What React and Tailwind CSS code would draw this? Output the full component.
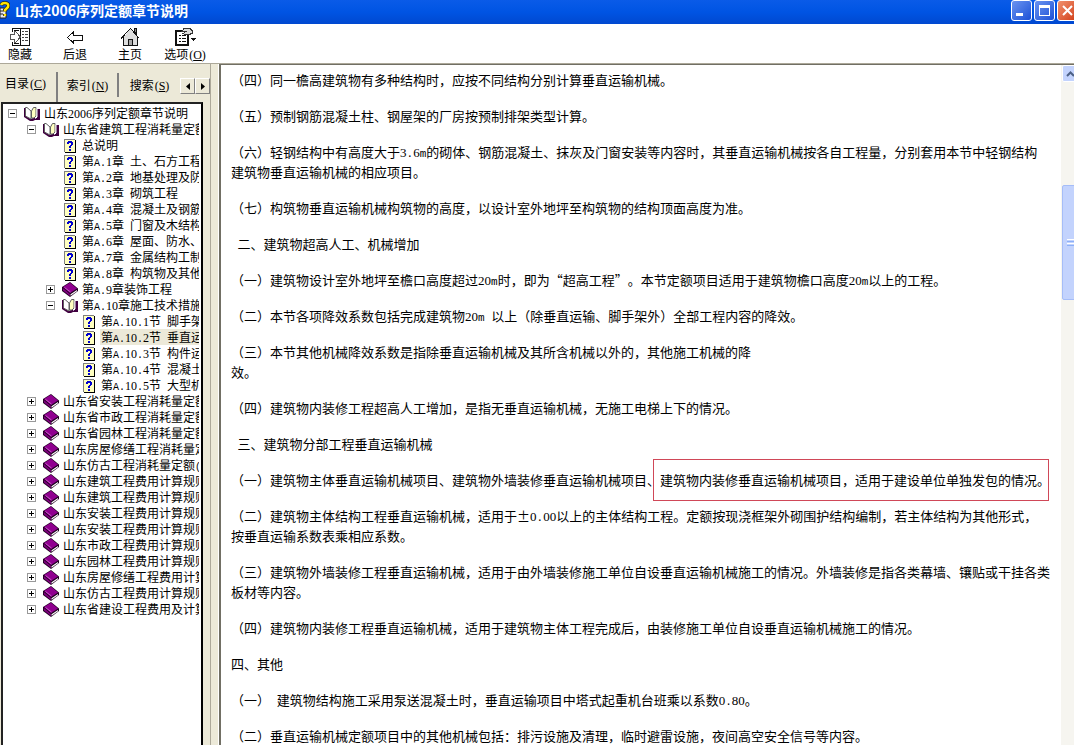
import { Fragment } from "react";

const TREE = [
  { level: 0, icon: "open", text: "山东2006序列定额章节说明" },
  { level: 1, icon: "open", text: "山东省建筑工程消耗量定额" },
  { level: 2, icon: "page", text: "总说明" },
  { level: 2, icon: "page", text: "第A.1章 土、石方工程" },
  { level: 2, icon: "page", text: "第A.2章 地基处理及防" },
  { level: 2, icon: "page", text: "第A.3章 砌筑工程" },
  { level: 2, icon: "page", text: "第A.4章 混凝土及钢筋" },
  { level: 2, icon: "page", text: "第A.5章 门窗及木结构" },
  { level: 2, icon: "page", text: "第A.6章 屋面、防水、" },
  { level: 2, icon: "page", text: "第A.7章 金属结构工制" },
  { level: 2, icon: "page", text: "第A.8章 构筑物及其他" },
  { level: 2, icon: "closed", text: "第A.9章装饰工程" },
  { level: 2, icon: "open", text: "第A.10章施工技术措施" },
  { level: 3, icon: "page", text: "第A.10.1节 脚手架" },
  { level: 3, icon: "page", text: "第A.10.2节 垂直运", selected: true },
  { level: 3, icon: "page", text: "第A.10.3节 构件运" },
  { level: 3, icon: "page", text: "第A.10.4节 混凝土" },
  { level: 3, icon: "page", text: "第A.10.5节 大型机" },
  { level: 1, icon: "closed", text: "山东省安装工程消耗量定额" },
  { level: 1, icon: "closed", text: "山东省市政工程消耗量定额" },
  { level: 1, icon: "closed", text: "山东省园林工程消耗量定额" },
  { level: 1, icon: "closed", text: "山东房屋修缮工程消耗量定" },
  { level: 1, icon: "closed", text: "山东仿古工程消耗量定额(" },
  { level: 1, icon: "closed", text: "山东建筑工程费用计算规则" },
  { level: 1, icon: "closed", text: "山东建筑工程费用计算规则" },
  { level: 1, icon: "closed", text: "山东安装工程费用计算规则" },
  { level: 1, icon: "closed", text: "山东安装工程费用计算规则" },
  { level: 1, icon: "closed", text: "山东市政工程费用计算规则" },
  { level: 1, icon: "closed", text: "山东园林工程费用计算规则" },
  { level: 1, icon: "closed", text: "山东房屋修缮工程费用计算" },
  { level: 1, icon: "closed", text: "山东仿古工程费用计算规则" },
  { level: 1, icon: "closed", text: "山东省建设工程费用及计算" },
];

const INDENT = ["pl-[5px]", "pl-[24px]", "pl-[43px]", "pl-[62px]"];

const PARAGRAPHS = [
  { text: "（四）同一檐高建筑物有多种结构时，应按不同结构分别计算垂直运输机械。" },
  { text: "（五）预制钢筋混凝土柱、钢屋架的厂房按预制排架类型计算。" },
  {
    text: "（六）轻钢结构中有高度大于3.6m的砌体、钢筋混凝土、抹灰及门窗安装等内容时，其垂直运输机械按各自工程量，分别套用本节中轻钢结构\n建筑物垂直运输机械的相应项目。",
  },
  { text: "（七）构筑物垂直运输机械构筑物的高度，以设计室外地坪至构筑物的结构顶面高度为准。" },
  { text: " 二、建筑物超高人工、机械增加" },
  {
    text: "（一）建筑物设计室外地坪至檐口高度超过20m时，即为“超高工程”。本节定额项目适用于建筑物檐口高度20m以上的工程。",
  },
  { text: "（二）本节各项降效系数包括完成建筑物20m 以上（除垂直运输、脚手架外）全部工程内容的降效。" },
  { text: "（三）本节其他机械降效系数是指除垂直运输机械及其所含机械以外的，其他施工机械的降\n效。" },
  { text: "（四）建筑物内装修工程超高人工增加，是指无垂直运输机械，无施工电梯上下的情况。" },
  { text: " 三、建筑物分部工程垂直运输机械" },
  {
    text: "（一）建筑物主体垂直运输机械项目、建筑物外墙装修垂直运输机械项目、",
    marked: "建筑物内装修垂直运输机械项目，适用于建设单位单独发包的情况。",
  },
  {
    text: "（二）建筑物主体结构工程垂直运输机械，适用于±0.00以上的主体结构工程。定额按现浇框架外砌围护结构编制，若主体结构为其他形式，\n按垂直运输系数表乘相应系数。",
  },
  {
    text: "（三）建筑物外墙装修工程垂直运输机械，适用于由外墙装修施工单位自设垂直运输机械施工的情况。外墙装修是指各类幕墙、镶贴或干挂各类\n板材等内容。",
  },
  { text: "（四）建筑物内装修工程垂直运输机械，适用于建筑物主体工程完成后，由装修施工单位自设垂直运输机械施工的情况。" },
  { text: "四、其他" },
  { text: "（一） 建筑物结构施工采用泵送混凝土时，垂直运输项目中塔式起重机台班乘以系数0.80。" },
  { text: "（二）垂直运输机械定额项目中的其他机械包括：排污设施及清理，临时避雷设施，夜间高空安全信号等内容。" },
];

// Digits come from the serif face, whose figures are half an em wide.
// Other Latin runs use a small mono face of the same width, ± takes a full cell.
function Mixed({ text, small }) {
  return text.split(/([0-9]+|[\x20-\x2f\x3a-\x7e]+|±)/).map((part, i) => {
    if (i % 2 === 0) {
      return <Fragment key={i}>{part}</Fragment>;
    }
    if (part === "±") {
      return (
        <span key={i} className="inline-block w-[13px] text-center leading-none">
          ±
        </span>
      );
    }
    return (
      <span
        key={i}
        className={
          /[0-9]/.test(part)
            ? "font-['Liberation_Serif',serif] leading-none"
            : `font-['Liberation_Mono',monospace] leading-none ${small}`
        }
      >
        {part}
      </span>
    );
  });
}

function HotKey({ letter }) {
  return (
    <span className="pl-px font-['Liberation_Serif',serif] leading-none">
      (<span className="underline">{letter}</span>)
    </span>
  );
}

function HelpIcon() {
  return (
    <svg width="10" height="18" viewBox="0 0 10 18" aria-hidden="true">
      <path d="M0 7h4l2 3v7H0z" fill="#e8e8f0" stroke="#222" />
      <path d="M0 10h3M0 13h3" stroke="#222" />
      <path d="M1 4q1-2 4-2q4 0 3 4l-3 3v1.500M5 13v2" fill="none" stroke="#222" strokeWidth="4" />
      <path d="M1 4q1-2 4-2q4 0 3 4l-3 3v1.500M5 13v2" fill="none" stroke="#ffe600" strokeWidth="2.500" />
    </svg>
  );
}

function HideIcon() {
  return (
    <svg width="20" height="18" viewBox="0 0 20 18" shapeRendering="crispEdges" aria-hidden="true">
      <path d="M2 0h18v18H2v-4h1v3h16V1H3v3H2z" fill="#111" />
      <path d="M10 1h1v16h-1zM4 2h5v1H4zM4 15h5v1H4z" fill="#111" />
      <path d="M12 3h2v1h-2zM15 3h3v1h-3zM12 6h2v1h-2zM15 6h3v1h-3zM12 9h2v1h-2zM15 9h3v1h-3zM12 12h2v1h-2zM15 12h3v1h-3z" fill="#444" />
      <path d="M.5 6.500H4v-3h1.500l5 5.500-5 5.500H4v-3H.5z" fill="#fff" stroke="#555" />
    </svg>
  );
}

function BackIcon() {
  return (
    <svg width="16" height="18" viewBox="0 0 16 18" shapeRendering="crispEdges" aria-hidden="true">
      <path d="M.5 9.500l6-5.500v3h8.500v5h-8.500v3z" fill="#fff" stroke="#111" />
    </svg>
  );
}

function HomeIcon() {
  return (
    <svg width="20" height="20" viewBox="0 0 20 20" shapeRendering="crispEdges" aria-hidden="true">
      <path d="M14.500 1h2v6l-2-2z" fill="#888" stroke="#111" />
      <path d="M3.500 10v9h14v-9L10.500 2z" fill="#ddd" />
      <path d="M3.500 10v8.500h14V10M1 11.500L10.500 1.500 19 11" fill="none" stroke="#111" />
      <path d="M8.500 18v-6h4v6" fill="#aaa" stroke="#111" />
    </svg>
  );
}

function OptionsIcon() {
  return (
    <svg width="21" height="18" viewBox="0 0 21 18" shapeRendering="crispEdges" aria-hidden="true">
      <path d="M1 3h12v14H1z" fill="#fff" stroke="#111" strokeWidth="2" />
      <path d="M4 7.500h2M7 7.500h4M4 10.500h2M7 10.500h4M4 13.500h2M7 13.500h4" stroke="#111" />
      <path d="M6.500 3.500L9 .5h6l2 2v3l-3 1h-4l-2-1 3-2z" fill="#ddd" stroke="#333" />
      <path d="M16 10h5v1h-1v1h-1v1h-1v-1h-1v-1h-1z" fill="#111" />
    </svg>
  );
}

function PageIcon() {
  return (
    <svg width="12" height="15" viewBox="0 0 12 15" shapeRendering="crispEdges" aria-hidden="true">
      <path d="M0 1h11v13H0z" fill="#808080" />
      <path d="M1 2h10v12H1z" fill="#ffffc0" />
      <path d="M11 2h1v13H1v-1h10z" fill="#000" />
      <path d="M3 4h1V3h4v1h1v3H8v1H7v2H5V8h1V7h1V5H5v1H3zM5 11h2v2H5z" fill="#0000d0" />
    </svg>
  );
}

function ClosedBookIcon() {
  return (
    <svg width="16" height="15" viewBox="0 0 16 15" aria-hidden="true">
      <path d="M0 5L8 0l8 6.500V9l-8 6-8-6z" fill="#200020" />
      <path d="M1 5l7-4.300L15 6.500 8 11z" fill="#900090" />
      <path d="M.8 6L8 12v2L1 8.500z" fill="#800080" />
      <path d="M8.500 12.300L15 8v1.200L8.500 13.800z" fill="#fff" />
      <path d="M2.500 5.500l6 4.500" stroke="#e080e0" strokeWidth=".7" />
    </svg>
  );
}

function OpenBookIcon() {
  return (
    <svg width="16" height="15" viewBox="0 0 16 15" aria-hidden="true">
      <path d="M0 2h2v8l5 3 2-1h4V3h3v11h-5l-2 1H6L0 11z" fill="#400040" />
      <path d="M1.500 1.500H3l4 3.500v8L1.500 10z" fill="#fff" stroke="#606060" />
      <path d="M7.500 5l2-3.500H12V10l-2 2H7.500z" fill="#ffffc0" stroke="#606060" />
      <path d="M13 2.500V11l-2 1.500" fill="none" stroke="#fff" />
    </svg>
  );
}

const ICONS = { open: OpenBookIcon, closed: ClosedBookIcon, page: PageIcon };

function Expander({ open }) {
  return (
    <button type="button" aria-label={open ? "折叠" : "展开"} className="h-[9px] w-[9px] shrink-0">
      <svg width="9" height="9" viewBox="0 0 9 9" shapeRendering="crispEdges" className="block">
        <path d="M.5.5h8v8h-8z" fill="#fff" stroke="#999" />
        <path d={open ? "M2 4.500h5" : "M2 4.500h5M4.500 2v5"} stroke="#000" />
      </svg>
    </button>
  );
}

function TreeRow({ item }) {
  const Icon = ICONS[item.icon];
  return (
    <li className={`flex h-4 items-center ${INDENT[item.level]}`}>
      {item.icon === "page" ? (
        <span className="w-[9px] shrink-0" />
      ) : (
        <Expander open={item.icon === "open"} />
      )}
      <span className="ml-[6px] flex w-[17px] shrink-0 justify-center">
        <Icon />
      </span>
      <a
        href="#topic"
        className={`ml-[3px] grow pl-px whitespace-pre ${item.selected ? "bg-[#ece9d8]" : ""}`}
      >
        <Mixed text={item.text} small="text-[10px]" />
      </a>
    </li>
  );
}

function ToolButton({ icon, children }) {
  return (
    <button type="button" className="flex w-10 flex-col items-center">
      <span className="flex h-[19px] items-center">{icon}</span>
      <span className="leading-4 whitespace-nowrap">{children}</span>
    </button>
  );
}

export default function App() {
  return (
    <div
      lang="zh-CN"
      className="flex h-screen flex-col overflow-hidden bg-white font-['Noto_Sans_CJK_SC',sans-serif] text-[12px] leading-4 text-black"
    >
      <header className="flex h-6 shrink-0 items-center bg-linear-to-b from-[#0a5be8] via-[#0054e3] to-[#0048d0] pb-1">
        <HelpIcon />
        <h1 className="ml-[5px] grow text-[14px] leading-5 font-bold text-white">
          山东2006序列定额章节说明
        </h1>
        <div className="-mr-1 flex shrink-0 gap-[2px] self-start">
          <button
            type="button"
            aria-label="最小化"
            className="flex h-[21px] w-[21px] items-end rounded-[3px] border border-white bg-linear-to-br from-[#6b93f0] to-[#1c4fd6] p-1"
          >
            <span className="h-[3px] w-[7px] bg-white" />
          </button>
          <button
            type="button"
            aria-label="最大化"
            className="flex h-[21px] w-[21px] items-center justify-center rounded-[3px] border border-white bg-linear-to-br from-[#6b93f0] to-[#1c4fd6]"
          >
            <span className="h-[11px] w-[11px] border border-t-[3px] border-white" />
          </button>
          <button
            type="button"
            aria-label="关闭"
            className="flex h-[21px] w-[21px] items-center justify-center rounded-[3px] border border-white bg-linear-to-br from-[#f0906c] to-[#d03a10]"
          >
            <svg width="11" height="11" viewBox="0 0 11 11">
              <path d="M1 1l9 9M10 1l-9 9" stroke="#fff" strokeWidth="2" />
            </svg>
          </button>
        </div>
      </header>

      <nav className="flex h-10 shrink-0 items-start gap-[15px] border-b border-[#aca899] pt-[3px]">
        <ToolButton icon={<HideIcon />}>隐藏</ToolButton>
        <ToolButton icon={<BackIcon />}>后退</ToolButton>
        <ToolButton icon={<HomeIcon />}>主页</ToolButton>
        <ToolButton icon={<OptionsIcon />}>
          选项
          <HotKey letter="O" />
        </ToolButton>
      </nav>

      <div className="flex min-h-0 grow">
        <aside className="flex w-[211px] shrink-0 flex-col border-r border-[#aca899] bg-[#ece9d8]">
          <div className="flex h-[38px] shrink-0 items-end">
            <button
              type="button"
              className="flex h-[30px] w-[58px] items-start border-r-2 border-[#808080] pt-[3px] pl-[5px]"
            >
              <span>
                目录
                <HotKey letter="C" />
              </span>
            </button>
            <button
              type="button"
              className="mb-[5px] flex h-6 w-[61px] items-center justify-center border-r-2 border-[#808080]"
            >
              <span>
                索引
                <HotKey letter="N" />
              </span>
            </button>
            <button type="button" className="mb-[5px] flex h-6 w-[61px] items-center justify-center">
              <span>
                搜索
                <HotKey letter="S" />
              </span>
            </button>
            <div className="mb-2 flex">
              <button
                type="button"
                aria-label="向左滚动"
                className="flex h-4 w-[15px] items-center justify-center border border-t-white border-r-[#808080] border-b-[#808080] border-l-white"
              >
                <svg width="4" height="7" viewBox="0 0 4 7">
                  <path d="M4 0v7L0 3.500z" />
                </svg>
              </button>
              <button
                type="button"
                aria-label="向右滚动"
                className="flex h-4 w-[15px] items-center justify-center border border-t-white border-r-[#808080] border-b-[#808080] border-l-white"
              >
                <svg width="4" height="7" viewBox="0 0 4 7">
                  <path d="M0 0v7l4-3.500z" />
                </svg>
              </button>
            </div>
          </div>
          <div className="ml-px w-[202px] grow overflow-hidden border-2 border-b-0 border-[#222] border-r-black bg-white pt-px pr-[2px]">
            <ul className="overflow-hidden">
              {TREE.map((item, i) => (
                <TreeRow key={i} item={item} />
              ))}
            </ul>
          </div>
        </aside>
        <div className="w-2 shrink-0 border-r border-white bg-[#ece9d8]" />

        <main className="min-w-0 grow overflow-hidden border-t border-l-2 border-[#716f64] pt-[5px] pl-[10px] text-[13px] leading-5 [text-spacing-trim:space-all]">
          {PARAGRAPHS.map((p, i) => (
            <p key={i} className="mb-4 whitespace-pre-wrap">
              <Mixed text={p.text} small="text-[11px]" />
              {p.marked && (
                <mark className="relative inline-block bg-transparent align-top text-black">
                  {p.marked}
                  <span className="absolute -inset-y-[11px] right-px -left-[7px] border border-[#d04858]" />
                </mark>
              )}
            </p>
          ))}
        </main>

        <div className="flex w-[13px] shrink-0 flex-col overflow-hidden border-t border-[#716f64] bg-[#f6f5f0] pl-px">
          <button
            type="button"
            aria-label="向上滚动"
            className="flex h-[17px] w-[17px] shrink-0 items-center justify-center rounded-[2px] border border-white bg-[#c3d3fd]"
          >
            <svg width="9" height="6" viewBox="0 0 9 6">
              <path d="M1 5l3.500-3.500L8 5" fill="none" stroke="#4d6185" strokeWidth="2" />
            </svg>
          </button>
          <div className="mt-[103px] flex h-[115px] w-[17px] shrink-0 flex-col items-center justify-center gap-px rounded-[2px] border border-[#a5bdf8] bg-[#c3d3fd]">
            <span className="h-px w-[7px] bg-white" />
            <span className="h-px w-[7px] bg-[#8cb0f8]" />
            <span className="h-px w-[7px] bg-white" />
            <span className="h-px w-[7px] bg-[#8cb0f8]" />
          </div>
        </div>
      </div>
    </div>
  );
}
